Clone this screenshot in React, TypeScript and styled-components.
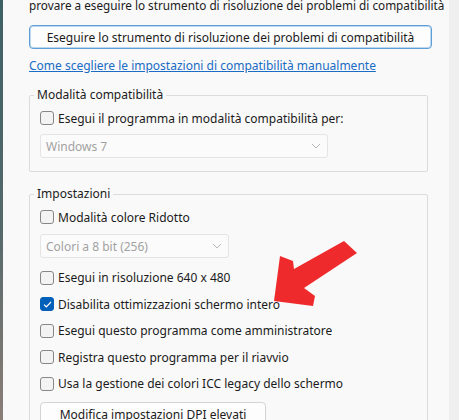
import React from "react";
import styled, { createGlobalStyle } from "styled-components";

const Global = createGlobalStyle`
  html, body { margin: 0; padding: 0; }
  body {
    background: #f9f9f9;
    font-family: "Noto Sans", "Liberation Sans", Arial, sans-serif;
    overflow: hidden;
  }
`;

const Screen = styled.div`
  position: relative;
  display: flex;
  width: 459px;
  height: 420px;
  overflow: hidden;
`;

const DesktopEdge = styled.div`
  width: 3px;
  flex: none;
  background: linear-gradient(#3e6166, #56696a 55%, #8b7e78);
`;

const Dialog = styled.div`
  flex: 1;
  min-width: 0;
  background: #f9f9f9;
  padding: 0 21px 0 26px;
  display: flex;
  flex-direction: column;
  color: #1b1b1b;
  font-size: 12px;
  & > * { flex-shrink: 0; }
`;

const RightBand = styled.div`
  width: 10px;
  flex: none;
  background: #efefef;
`;

const Intro = styled.p`
  margin: -19px 0 0;
  font-size: 11.75px;
  line-height: 16px;
  white-space: nowrap;
`;

const PrimaryButton = styled.button`
  margin: 12px -4px 0 0;
  height: 24px;
  border: 1px solid #5d9fd6;
  box-shadow: inset 0 0 0 1px #bcd7ee;
  border-radius: 4px;
  background: #fdfdfd;
  color: #1b1b1b;
  font: inherit;
  padding: 0;
`;

const HelpLink = styled.a`
  margin-top: 9px;
  line-height: 16px;
  color: #1a6cc4;
  text-decoration: underline;
  align-self: flex-start;
`;

const Group = styled.fieldset<{ $top: number }>`
  margin: ${(p) => p.$top}px 0 0;
  border: 1px solid #dcdcdc;
  border-radius: 2px;
  padding: 7px 10px 13px;
  min-width: 0;
  display: flex;
  flex-direction: column;
  & > * { flex-shrink: 0; }
`;

const GroupTitle = styled.legend`
  margin-left: -6px;
  padding: 0 3px;
  line-height: 16px;
  color: #1b1b1b;
`;

const Row = styled.label<{ $top?: number }>`
  display: flex;
  align-items: center;
  gap: 4px;
  height: 16px;
  margin-top: ${(p) => p.$top ?? 0}px;
  white-space: nowrap;
`;

const Box = styled.span<{ $checked?: boolean }>`
  width: 14px;
  height: 14px;
  box-sizing: border-box;
  border-radius: 3px;
  border: 1px solid ${(p) => (p.$checked ? "#005fb8" : "#878787")};
  background: ${(p) => (p.$checked ? "#005fb8" : "#f3f3f3")};
  display: inline-flex;
  align-items: center;
  justify-content: center;
  flex: none;
`;

const Select = styled.div<{ $width: number; $top: number }>`
  width: ${(p) => p.$width}px;
  height: 24px;
  box-sizing: border-box;
  margin-top: ${(p) => p.$top}px;
  border: 1px solid #e4e4e4;
  border-radius: 3px;
  background: #fbfbfb;
  color: #a2a2a2;
  display: flex;
  align-items: center;
  justify-content: space-between;
  padding: 0 6px 0 5px;
`;

const SecondaryButton = styled.button`
  margin-top: 10.5px;
  width: 226px;
  height: 24px;
  border: 1px solid #d4d4d4;
  border-radius: 4px;
  background: #fdfdfd;
  color: #1b1b1b;
  font: inherit;
  padding: 0;
  align-self: flex-start;
`;

const ArrowMark = styled.svg`
  position: absolute;
  left: 265px;
  top: 235px;
  width: 100px;
  height: 80px;
`;

const Checkbox = ({ checked, label, top }: { checked?: boolean; label: string; top?: number }) => (
  <Row $top={top}>
    <Box $checked={checked}>
      {checked && (
        <svg width="9" height="7" viewBox="0 0 9 7">
          <path d="M1 3.6 L3.3 5.8 L8 1" fill="none" stroke="#fff" strokeWidth="1.2" />
        </svg>
      )}
    </Box>
    {label}
  </Row>
);

const Chevron = () => (
  <svg width="10" height="6" viewBox="0 0 10 6">
    <path d="M1 1 L5 5 L9 1" fill="none" stroke="#b8b8b8" strokeWidth="1" />
  </svg>
);

export default function App() {
  return (
    <>
      <Global />
      <Screen>
        <DesktopEdge />
        <Dialog>
          <Intro>
            Se questo programma non funziona correttamente in questa versione di Windows,
            <br />
            provare a eseguire lo strumento di risoluzione dei problemi di compatibilità
          </Intro>
          <PrimaryButton>Eseguire lo strumento di risoluzione dei problemi di compatibilità</PrimaryButton>
          <HelpLink href="#">Come scegliere le impostazioni di compatibilità manualmente</HelpLink>
          <Group $top={13}>
            <GroupTitle>Modalità compatibilità</GroupTitle>
            <Checkbox label="Esegui il programma in modalità compatibilità per:" />
            <Select $width={288} $top={8}>
              Windows 7
              <Chevron />
            </Select>
          </Group>
          <Group $top={14}>
            <GroupTitle>Impostazioni</GroupTitle>
            <Checkbox label="Modalità colore Ridotto" />
            <Select $width={189} $top={9}>
              Colori a 8 bit (256)
              <Chevron />
            </Select>
            <Checkbox top={11.5} label="Esegui in risoluzione 640 x 480" />
            <Checkbox top={10.5} checked label="Disabilita ottimizzazioni schermo intero" />
            <Checkbox top={10.5} label="Esegui questo programma come amministratore" />
            <Checkbox top={10.5} label="Registra questo programma per il riavvio" />
            <Checkbox top={10.5} label="Usa la gestione dei colori ICC legacy dello schermo" />
            <SecondaryButton>Modifica impostazioni DPI elevati</SecondaryButton>
          </Group>
        </Dialog>
        <RightBand />
        <ArrowMark viewBox="265 235 100 80">
          <polygon
            points="274,301 280,256 293,261 294,269 344,241 357,253 304,288 315,296 313,306"
            fill="#ef2a2c"
          />
        </ArrowMark>
      </Screen>
    </>
  );
}
